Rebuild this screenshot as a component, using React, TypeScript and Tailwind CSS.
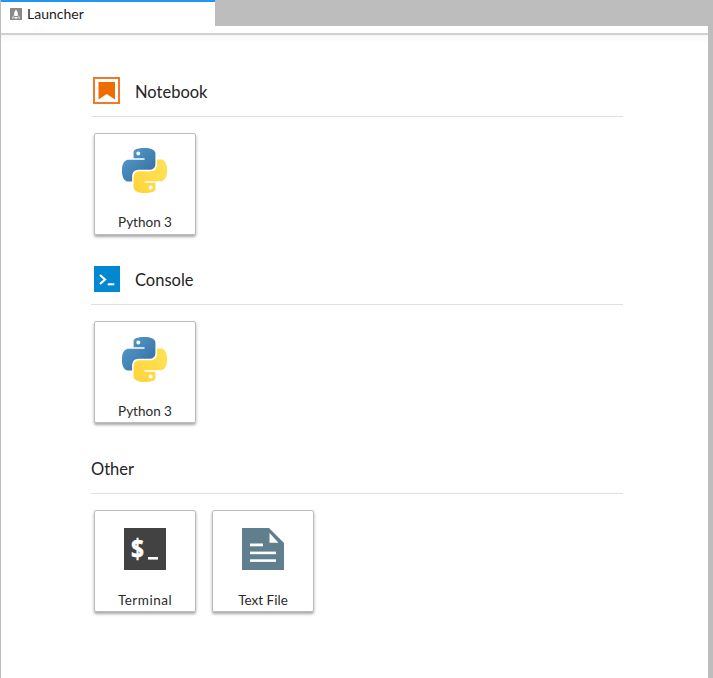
import { clsx } from "clsx";

const blue = "M14.25.18l.9.2.73.26.59.3.45.32.34.34.25.34.16.33.1.3.04.26.02.2-.01.13V8.5l-.05.63-.13.55-.21.46-.26.38-.3.31-.33.25-.35.19-.35.14-.33.1-.3.07-.26.04-.21.02H8.77l-.69.05-.59.14-.5.22-.41.27-.33.32-.27.35-.2.36-.15.37-.1.35-.07.32-.04.27-.02.21v3.06H3.17l-.21-.03-.28-.07-.32-.12-.35-.18-.36-.26-.36-.36-.35-.46-.32-.59-.28-.73-.21-.88-.14-1.05-.05-1.23.06-1.22.16-1.04.24-.87.32-.71.36-.57.4-.44.42-.33.42-.24.4-.16.36-.1.32-.05.24-.01h.16l.06.01h8.16v-.83H6.18l-.01-2.75-.02-.37.05-.34.11-.31.17-.28.25-.26.31-.23.38-.2.44-.18.51-.15.58-.12.64-.1.71-.06.77-.04.84-.02 1.27.05zm-6.3 1.98l-.23.33-.08.41.08.41.23.34.33.22.41.09.41-.09.33-.22.23-.34.08-.41-.08-.41-.23-.33-.33-.22-.41-.09-.41.09z";
const yellow = "M21.04 6.11l.28.06.32.12.35.18.36.27.36.35.35.47.32.59.28.73.21.88.14 1.04.05 1.23-.06 1.23-.16 1.04-.24.86-.32.71-.36.57-.4.45-.42.33-.42.24-.4.16-.36.09-.32.05-.24.02-.16-.01h-8.22v.82h5.84l.01 2.76.02.36-.05.34-.11.31-.17.29-.25.25-.31.24-.38.2-.44.17-.51.15-.58.13-.64.09-.71.07-.77.04-.84.01-1.27-.04-1.07-.14-.9-.2-.73-.25-.59-.3-.45-.33-.34-.34-.25-.34-.16-.33-.1-.3-.04-.25-.02-.2.01-.13v-5.34l.05-.64.13-.54.21-.46.26-.38.3-.32.33-.24.35-.2.35-.14.33-.1.3-.06.26-.04.21-.02.13-.01h5.84l.69-.05.59-.14.5-.21.41-.28.33-.32.27-.35.2-.36.15-.36.1-.35.07-.32.04-.28.02-.21V6.07h2.09l.14.01zm-6.47 14.25l-.23.33-.08.41.08.41.23.33.33.23.41.08.41-.08.33-.23.23-.33.08-.41-.08-.41-.23-.33-.33-.23-.41-.08-.41.08z";

function PythonIcon({ id }: { id: string }) {
  return (
    <svg viewBox="0 0 24 24" className="mr-px h-[45px] w-[45px]">
      <defs>
        <linearGradient id={id + "b"} x1="0" y1="0" x2="1" y2="1">
          <stop offset="0" stopColor="#5a9fd4" />
          <stop offset="1" stopColor="#306998" />
        </linearGradient>
        <linearGradient id={id + "y"} x1="0.2" y1="1" x2="0.8" y2="0.3">
          <stop offset="0" stopColor="#ffd43b" />
          <stop offset="1" stopColor="#ffe052" />
        </linearGradient>
      </defs>
      <path d={blue} fill={`url(#${id}b)`} fillRule="evenodd" />
      <path d={yellow} fill={`url(#${id}y)`} fillRule="evenodd" />
    </svg>
  );
}

function TerminalIcon() {
  return (
    <svg viewBox="0 0 42 42" className="h-[42px] w-[42px]">
      <rect width="42" height="42" fill="#424242" />
      <text x="7" y="30.5" fontSize="27" fontWeight="700" fill="#fff" stroke="#fff" strokeWidth="0.5" fontFamily="'Noto Sans', sans-serif" textLength="13" lengthAdjust="spacingAndGlyphs">$</text>
      <rect x="24" y="29" width="10" height="2.6" fill="#fff" />
    </svg>
  );
}

function TextFileIcon() {
  return (
    <svg viewBox="0 0 42 42" className="h-[42px] w-[42px]">
      <path d="M0 0H27L42 15V42H0Z" fill="#5f7f8f" />
      <path d="M27.5 5L36.5 14.7H27.5Z" fill="#fff" />
      <rect x="8" y="15.5" width="13" height="2.8" fill="#fff" />
      <rect x="8" y="23.6" width="26" height="2.6" fill="#fff" />
      <rect x="8" y="31.3" width="26" height="2.6" fill="#fff" />
    </svg>
  );
}

function NotebookIcon() {
  return (
    <svg viewBox="0 0 27 27" className="-ml-px h-[27px] w-[27px]">
      <rect x="1" y="1" width="25" height="25" fill="#fff" stroke="#f37726" strokeWidth="2" />
      <path d="M5.5 5H22V22.5L13.75 17L5.5 22.5Z" fill="#ef6c00" />
    </svg>
  );
}

function ConsoleIcon() {
  return (
    <svg viewBox="0 0 26 26" className="h-[26px] w-[26px]">
      <rect width="26" height="26" fill="#0288d1" />
      <path d="M6 9L11 13.5L6 18" fill="none" stroke="#fff" strokeWidth="2.2" />
      <rect x="13.7" y="17.3" width="6.6" height="2" fill="#fff" />
    </svg>
  );
}

function Card({ label, tight, wide, children }: { label: string; tight?: boolean; wide?: boolean; children: React.ReactNode }) {
  return (
    <div className="flex h-[102px] w-[102px] flex-col items-center rounded-[2px] border border-[#bdbdbd] bg-white shadow-[0_2px_3px_rgba(0,0,0,0.35)]">
      <div className={clsx("flex w-full items-center justify-center", tight ? "h-[80px] pb-[7px]" : "h-[81px] pb-[6px]")}>{children}</div>
      <span className={clsx("text-[13.5px] leading-[16px] text-[#2a2a2a]", wide && "tracking-[0.5px]")}>{label}</span>
    </div>
  );
}

function Section({ title, icon, className, children }: { title: string; icon?: React.ReactNode; className?: string; children: React.ReactNode }) {
  return (
    <section className={className}>
      <div className="flex h-[42px] items-center border-b border-[#e0e0e0] pb-[8px]">
        {icon ? <div className="mb-[2px] ml-[3px] mr-[15px] flex">{icon}</div> : null}
        <h2 className="text-[16.5px] font-normal leading-[26px] text-[#242424]">{title}</h2>
      </div>
      <div className="mt-[16px] flex gap-[16px] pl-[3px]">{children}</div>
    </section>
  );
}

export default function App() {
  return (
    <div className="flex h-[678px] w-[713px] flex-col overflow-hidden bg-[#bdbdbd] pl-px pr-[5px] font-['Lato',sans-serif]">
      <div className="flex h-[26px] shrink-0">
        <div className="flex w-[214px] items-center gap-[5px] border-t-2 border-[#2196f3] bg-white pl-[9px]">
          <svg viewBox="0 0 12 12" className="h-[12px] w-[12px]">
            <rect width="12" height="12" fill="#8a8a8a" />
            <path d="M6 1.5L7.8 4.5V8H4.2V4.5Z" fill="#fff" />
            <path d="M2 10.5L3.5 7V10.5ZM10 10.5L8.5 7V10.5Z" fill="#fff" />
            <rect x="4.5" y="9" width="3" height="1.5" fill="#fff" />
          </svg>
          <span className="text-[14px] leading-[16px] text-[#1c1c1c]">Launcher</span>
        </div>
      </div>
      <div className="h-[7px] shrink-0 bg-white" />
      <div className="h-[2px] shrink-0 bg-[#d0d0d0]" />
      <main className="flex-1 bg-gradient-to-b from-[#f7f7f7] to-white to-[8px] pl-[90px] pt-[40px]">
        <div className="w-[532px]">
          <Section title="Notebook" icon={<NotebookIcon />}>
            <Card label="Python 3" tight><PythonIcon id="a" /></Card>
          </Section>
          <Section title="Console" icon={<ConsoleIcon />} className="mt-[28px]">
            <Card label="Python 3"><PythonIcon id="c" /></Card>
          </Section>
          <Section title="Other" className="mt-[29px]">
            <Card label="Terminal" wide><TerminalIcon /></Card>
            <Card label="Text File"><TextFileIcon /></Card>
          </Section>
        </div>
      </main>
    </div>
  );
}
